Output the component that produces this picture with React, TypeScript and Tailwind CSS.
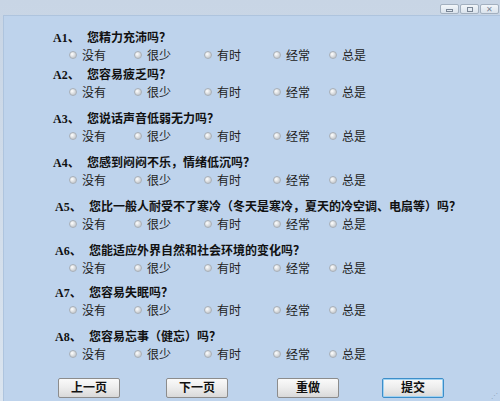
import React from "react";

const options = ["没有", "很少", "有时", "经常", "总是"];
const colWidths = ["w-[65px]", "w-[70px]", "w-[69px]", "w-[56px]", "w-[50px]"];

const questions = [
  { id: "A1", text: "您精力充沛吗？", mt: "mt-[13px]", pl: "pl-[49px]" },
  { id: "A2", text: "您容易疲乏吗？", mt: "mt-[3px]", pl: "pl-[49px]" },
  { id: "A3", text: "您说话声音低弱无力吗？", mt: "mt-[10px]", pl: "pl-[49px]" },
  { id: "A4", text: "您感到闷闷不乐，情绪低沉吗？", mt: "mt-[10px]", pl: "pl-[49px]" },
  { id: "A5", text: "您比一般人耐受不了寒冷（冬天是寒冷，夏天的冷空调、电扇等）吗？", mt: "mt-[10px]", pl: "pl-[51px]" },
  { id: "A6", text: "您能适应外界自然和社会环境的变化吗？", mt: "mt-[10px]", pl: "pl-[51px]" },
  { id: "A7", text: "您容易失眠吗？", mt: "mt-[8px]", pl: "pl-[51px]" },
  { id: "A8", text: "您容易忘事（健忘）吗？", mt: "mt-[10px]", pl: "pl-[51px]" },
];

const font = { fontFamily: '"Liberation Serif", "Noto Sans CJK SC", serif' };

function Radio() {
  return (
    <span className="inline-block w-[8px] h-[8px] rounded-full border border-[#a9b0b8] bg-[radial-gradient(circle_at_35%_35%,#ffffff,#c9cdd1_70%)] mr-[5px] shrink-0" />
  );
}

function TitleBtn({ children }: { children: React.ReactNode }) {
  return (
    <div className="w-[19px] h-[10px] border border-[#a3b0bf] rounded-[2px] bg-gradient-to-b from-[#f2f6fa] to-[#d9e2ec] flex items-center justify-center">
      {children}
    </div>
  );
}

function Button({ label, focused }: { label: string; focused?: boolean }) {
  return (
    <button
      className={
        "w-[62px] h-[20px] rounded-[2px] border bg-gradient-to-b from-[#fafafa] via-[#ececec] to-[#d9d9d9] text-[12px] font-bold text-[#111] flex items-center justify-center " +
        (focused ? "border-[#3d8ec9] shadow-[inset_0_0_0_1px_#9fd2f2]" : "border-[#8c8c8c]")
      }
      style={font}
    >
      {label}
    </button>
  );
}

export default function App() {
  return (
    <div className="w-[500px] h-[401px] bg-gradient-to-b from-[#c8d5e5] to-[#dae4ef] flex flex-col overflow-hidden">
      <div className="h-[15px] flex items-start justify-end gap-[1px] pt-[4px] pr-[1px]">
        <TitleBtn>
          <span className="w-[7px] h-[3px] border border-[#7a8696] mt-[2px]" />
        </TitleBtn>
        <TitleBtn>
          <span className="w-[6px] h-[5px] border border-[#7a8696]" />
        </TitleBtn>
        <TitleBtn>
          <span className="text-[8px] leading-none text-[#7a8696]">✕</span>
        </TitleBtn>
      </div>
      <div className="flex-1 ml-[3px] bg-[#bed3ec] border-l border-t border-[#aec4de] flex flex-col relative">
        {questions.map((q) => (
          <div key={q.id} className={q.mt}>
            <div className={"h-[17px] flex items-center text-[12px] font-bold text-[#111] " + q.pl} style={font}>
              <span className="w-[34px]">{q.id}、</span>
              <span>{q.text}</span>
            </div>
            <div className="h-[17px] flex items-center pl-[65px] text-[12px] text-[#222]" style={{ fontFamily: '"Noto Sans CJK SC", sans-serif' }}>
              {options.map((o, i) => (
                <div key={o} className={"flex items-center " + colWidths[i]}>
                  <Radio />
                  <span className="leading-none">{o}</span>
                </div>
              ))}
            </div>
          </div>
        ))}
        <div className="mt-auto mb-[3px] flex items-center pl-[54px]">
          <Button label="上一页" />
          <div className="w-[46px]" />
          <Button label="下一页" />
          <div className="w-[49px]" />
          <Button label="重做" />
          <div className="w-[43px]" />
          <Button label="提交" focused />
        </div>
        <span className="absolute right-[2px] bottom-[2px] text-[7px] leading-none text-[#8ea4bd]">⋰</span>
      </div>
    </div>
  );
}
